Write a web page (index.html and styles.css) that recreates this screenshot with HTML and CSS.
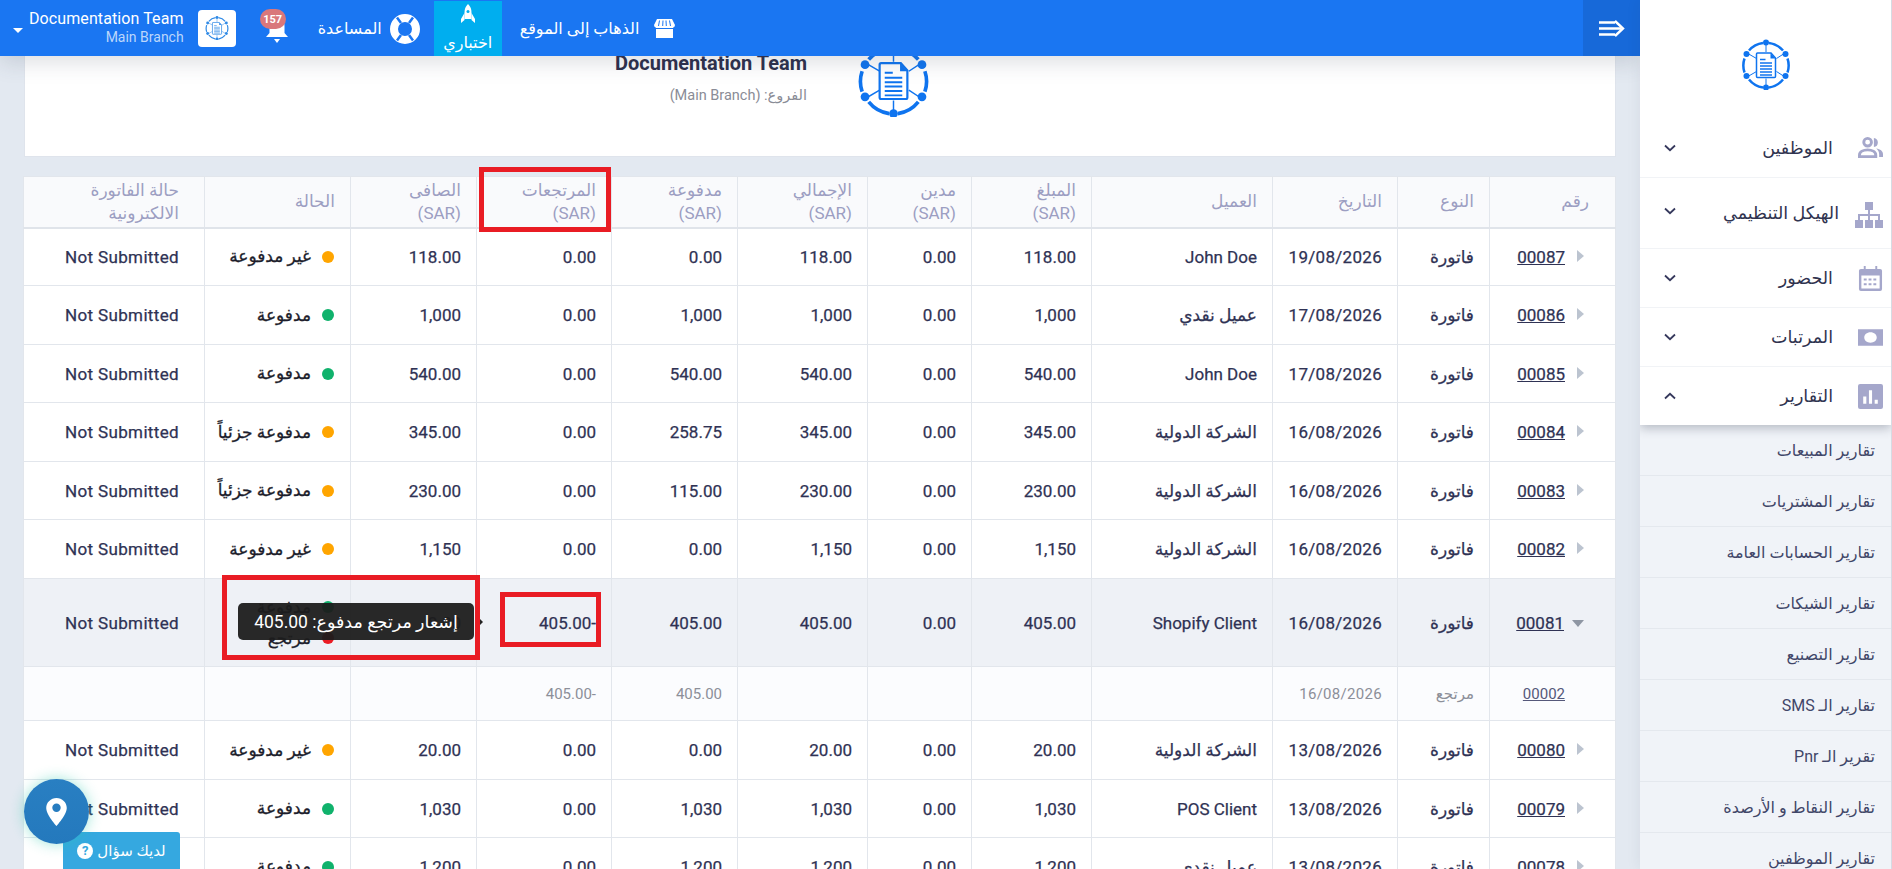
FILE: index.html
```html
<!DOCTYPE html>
<html lang="ar" dir="rtl">
<head>
<meta charset="utf-8">
<title>التقارير</title>
<link rel="stylesheet" href="styles.css">
</head>
<body>
<svg class="defs" width="0" height="0" aria-hidden="true">
  <symbol id="logo" viewBox="0 0 100 100">
    <g fill="none" stroke="currentColor" stroke-width="5">
      <path d="M56 7 A44 44 0 0 1 84 22"/>
      <path d="M93 38 A44 44 0 0 1 93 66"/>
      <path d="M84 80 A44 44 0 0 1 56 96"/>
      <path d="M44 96 A44 44 0 0 1 16 80"/>
      <path d="M7 66 A44 44 0 0 1 7 38"/>
      <path d="M16 22 A44 44 0 0 1 44 7"/>
    </g>
    <g stroke="currentColor" stroke-width="2" fill="none">
      <path d="M50 6V25M50 78V96M12 27L31 38M88 27L71 38M12 75L31 64M88 75L71 64"/>
    </g>
    <g fill="currentColor">
      <circle cx="50" cy="6" r="6"/><circle cx="50" cy="96" r="6"/>
      <circle cx="11" cy="29" r="6"/><circle cx="89" cy="29" r="6"/>
      <circle cx="11" cy="73" r="6"/><circle cx="89" cy="73" r="6"/>
    </g>
    <path d="M33 27H60L69 37V74a2 2 0 0 1-2 2H33a2 2 0 0 1-2-2V29a2 2 0 0 1 2-2Z" fill="#fff" stroke="currentColor" stroke-width="3"/>
    <path d="M59 27V38H69Z" fill="currentColor"/>
    <path d="M38 40H49M38 47H62M38 53H62M38 59H62M38 65H62M38 71H62" stroke="currentColor" stroke-width="2.6"/>
  </symbol>
  <symbol id="chev-down" viewBox="0 0 12 8"><path d="M1 1.5 6 6.2 11 1.5" fill="none" stroke="currentColor" stroke-width="1.8"/></symbol>
</svg>

<div class="app">
  <aside class="sidebar">
    <div class="side-top">
      <div class="side-logo"><svg class="side-logo-img"><use href="#logo"/></svg></div>
      <nav class="side-nav">
        <a class="side-item">
          <svg class="side-icon" viewBox="0 0 26 22"><circle cx="10" cy="5.500" r="4" fill="none" stroke="currentColor" stroke-width="3"/><path d="M16.500 1a4.800 4.800 0 0 1 0 9.500Z" fill="currentColor"/><path d="M1.500 20.500v-1.500c0-3.500 4-5.500 8.500-5.500s8.500 2 8.500 5.500v1.500Z" fill="none" stroke="currentColor" stroke-width="3"/><path d="M19 12c4 .6 7 2.600 7 6v3h-4v-3c0-2.500-1.200-4.500-3-6Z" fill="currentColor"/></svg>
          <span class="side-label">الموظفين</span>
          <svg class="side-chev"><use href="#chev-down"/></svg>
        </a>
        <a class="side-item side-item-tall">
          <svg class="side-icon side-icon-wide" viewBox="0 0 28 26"><path d="M10 0h8v8h-8ZM0 18h8v8H0ZM10 18h8v8h-8ZM20 18h8v8h-8Z" fill="currentColor"/><path d="M14 8v10M4 18v-5h20v5" fill="none" stroke="currentColor" stroke-width="2"/></svg>
          <span class="side-label">الهيكل التنظيمي</span>
          <svg class="side-chev"><use href="#chev-down"/></svg>
        </a>
        <a class="side-item">
          <svg class="side-icon" viewBox="0 0 24 26"><path d="M2 3h3V0h2v3h10V0h2v3h3a2 2 0 0 1 2 2v19a2 2 0 0 1-2 2H2a2 2 0 0 1-2-2V5a2 2 0 0 1 2-2Zm.5 7v13.500h19V10Z" fill="currentColor"/><path d="M5 13h3v2H5ZM10 13h3v2h-3ZM15 13h3v2h-3ZM5 18h3v2H5ZM10 18h3v2h-3ZM15 18h3v2h-3Z" fill="currentColor"/></svg>
          <span class="side-label">الحضور</span>
          <svg class="side-chev"><use href="#chev-down"/></svg>
        </a>
        <a class="side-item">
          <svg class="side-icon" viewBox="0 0 24 16"><path d="M0 0h24v16H0Zm12 3c-3.500 0-6 2.200-6 5s2.500 5 6 5 6-2.200 6-5-2.500-5-6-5Z" fill="currentColor" fill-rule="evenodd"/></svg>
          <span class="side-label">المرتبات</span>
          <svg class="side-chev"><use href="#chev-down"/></svg>
        </a>
        <a class="side-item side-item-open">
          <svg class="side-icon" viewBox="0 0 24 24"><path d="M2 0h20a2 2 0 0 1 2 2v20a2 2 0 0 1-2 2H2a2 2 0 0 1-2-2V2a2 2 0 0 1 2-2Zm3 12v7h3v-7Zm5.500-6v13h3V6Zm5.500 9v4h3v-4Z" fill="currentColor" fill-rule="evenodd"/></svg>
          <span class="side-label">التقارير</span>
          <svg class="side-chev side-chev-up"><use href="#chev-down"/></svg>
        </a>
      </nav>
    </div>
    <ul class="sub-menu">
      <li>تقارير المبيعات</li>
      <li>تقارير المشتريات</li>
      <li>تقارير الحسابات العامة</li>
      <li>تقارير الشيكات</li>
      <li>تقارير التصنيع</li>
      <li>تقارير الـ SMS</li>
      <li>تقرير الـ Pnr</li>
      <li>تقارير النقاط و الأرصدة</li>
      <li>تقارير الموظفين</li>
    </ul>
  </aside>

  <main class="main">
    <header class="topbar">
      <button class="collapse-btn" type="button" aria-label="طي">
        <svg class="collapse-icon" viewBox="0 0 26 17"><path d="M0 2.500h16M0 8.500h22M0 14.500h16" stroke="#fff" stroke-width="2.600" fill="none"/><path d="M16 1 24 8.500 16 16" stroke="#fff" stroke-width="2.400" fill="none"/></svg>
      </button>
      <div class="top-links">
        <a class="top-link top-link-store">
          <svg class="store-icon" viewBox="0 0 21 19"><path d="M3 0h15l3 6a3 3 0 0 1-2 2.800V19H2V8.800A3 3 0 0 1 0 6Z" fill="#fff"/><path d="M5.500 1.500 4.500 7M9 1.500 8.700 7M12 1.500l.3 5.500M15.500 1.500l1 5.500" stroke="#1a76f2" stroke-width="1"/><path d="M2 9.500h17" stroke="#1a76f2" stroke-width="1"/></svg>
          <span class="store-text">الذهاب إلى الموقع</span>
        </a>
        <a class="top-trial">
          <svg class="rocket-icon" viewBox="0 0 16 20"><path d="M8 0c2.600 2.500 3.500 5.500 3.500 8.500V15h-7V8.500C4.500 5.500 5.400 2.500 8 0Z" fill="#fff"/><path d="M4.500 9 1 15v4l3.500-3ZM11.500 9 15 15v4l-3.500-3Z" fill="#fff"/><circle cx="8" cy="7.500" r="1.500" fill="#00aeef"/></svg>
          <span>اختباري</span>
        </a>
        <a class="top-link top-link-help">
          <svg class="buoy-icon" viewBox="0 0 30 30"><circle cx="15" cy="15" r="11" fill="none" stroke="#fff" stroke-width="8"/><path d="M7 3.500 11 9M23 3.500 19 9M7 26.500 11 21M23 26.500 19 21" stroke="#1a76f2" stroke-width="2.500"/></svg>
          <span>المساعدة</span>
        </a>
        <a class="top-bell">
          <svg class="bell-icon" viewBox="0 0 22 26"><path d="M11 1c5 0 7.500 3.500 7.500 8v7l3.500 4H0l3.500-4V9C3.500 4.500 6 1 11 1Z" fill="#fff"/><path d="M8 22h6l-3 4Z" fill="#fff"/></svg>
          <span class="bell-badge">157</span>
        </a>
        <div class="top-account">
          <span class="account-logo"><svg class="account-logo-img"><use href="#logo"/></svg></span>
          <span class="account-text">
            <span class="account-name">Documentation Team</span>
            <span class="account-branch">Main Branch</span>
          </span>
          <span class="account-caret"></span>
        </div>
      </div>
    </header>

    <div class="content">
      <section class="company-card">
        <svg class="company-logo"><use href="#logo"/></svg>
        <div class="company-text">
          <h1 class="company-name">Documentation Team</h1>
          <p class="company-branch">الفروع: (Main Branch)</p>
        </div>
      </section>

      <table class="invoices">
        <colgroup>
          <col class="c-num"><col class="c-type"><col class="c-date"><col class="c-client"><col class="c-amount"><col class="c-due"><col class="c-total"><col class="c-paid"><col class="c-ret"><col class="c-net"><col class="c-status"><col class="c-einv">
        </colgroup>
        <thead>
          <tr>
            <th class="first">رقم</th><th>النوع</th><th>التاريخ</th><th>العميل</th><th>المبلغ<br>(SAR)</th><th>مدين<br>(SAR)</th><th>الإجمالي<br>(SAR)</th><th>مدفوعة<br>(SAR)</th><th>المرتجعات<br>(SAR)</th><th>الصافى<br>(SAR)</th><th>الحالة</th><th class="last">حالة الفاتورة<br>الالكترونية</th>
          </tr>
        </thead>
        <tbody>
          <tr><td class="first"><span class="arrow"></span><a class="num">00087</a></td><td>فاتورة</td><td class="date">19/08/2026</td><td>John Doe</td><td>118.00</td><td>0.00</td><td>118.00</td><td>0.00</td><td>0.00</td><td>118.00</td><td><span class="status"><i class="dot dot-orange"></i>غير مدفوعة</span></td><td class="last">Not Submitted</td></tr>
          <tr><td class="first"><span class="arrow"></span><a class="num">00086</a></td><td>فاتورة</td><td class="date">17/08/2026</td><td>عميل نقدي</td><td>1,000</td><td>0.00</td><td>1,000</td><td>1,000</td><td>0.00</td><td>1,000</td><td><span class="status"><i class="dot dot-green"></i>مدفوعة</span></td><td class="last">Not Submitted</td></tr>
          <tr><td class="first"><span class="arrow"></span><a class="num">00085</a></td><td>فاتورة</td><td class="date">17/08/2026</td><td>John Doe</td><td>540.00</td><td>0.00</td><td>540.00</td><td>540.00</td><td>0.00</td><td>540.00</td><td><span class="status"><i class="dot dot-green"></i>مدفوعة</span></td><td class="last">Not Submitted</td></tr>
          <tr><td class="first"><span class="arrow"></span><a class="num">00084</a></td><td>فاتورة</td><td class="date">16/08/2026</td><td>الشركة الدولية</td><td>345.00</td><td>0.00</td><td>345.00</td><td>258.75</td><td>0.00</td><td>345.00</td><td><span class="status"><i class="dot dot-orange"></i>مدفوعة جزئياً</span></td><td class="last">Not Submitted</td></tr>
          <tr><td class="first"><span class="arrow"></span><a class="num">00083</a></td><td>فاتورة</td><td class="date">16/08/2026</td><td>الشركة الدولية</td><td>230.00</td><td>0.00</td><td>230.00</td><td>115.00</td><td>0.00</td><td>230.00</td><td><span class="status"><i class="dot dot-orange"></i>مدفوعة جزئياً</span></td><td class="last">Not Submitted</td></tr>
          <tr><td class="first"><span class="arrow"></span><a class="num">00082</a></td><td>فاتورة</td><td class="date">16/08/2026</td><td>الشركة الدولية</td><td>1,150</td><td>0.00</td><td>1,150</td><td>0.00</td><td>0.00</td><td>1,150</td><td><span class="status"><i class="dot dot-orange"></i>غير مدفوعة</span></td><td class="last">Not Submitted</td></tr>
          <tr class="row-open"><td class="first"><span class="arrow arrow-open"></span><a class="num">00081</a></td><td>فاتورة</td><td class="date">16/08/2026</td><td>Shopify Client</td><td>405.00</td><td>0.00</td><td>405.00</td><td>405.00</td><td>-405.00</td><td>0.00</td><td><span class="status"><i class="dot dot-green"></i>مدفوعة</span><span class="status"><i class="dot dot-red"></i>مرتجع</span></td><td class="last">Not Submitted</td></tr>
          <tr class="row-child"><td class="first"><a class="num">00002</a></td><td>مرتجع</td><td class="date">16/08/2026</td><td></td><td></td><td></td><td></td><td>405.00</td><td>-405.00</td><td></td><td></td><td></td></tr>
          <tr class="row-tall"><td class="first"><span class="arrow"></span><a class="num">00080</a></td><td>فاتورة</td><td class="date">13/08/2026</td><td>الشركة الدولية</td><td>20.00</td><td>0.00</td><td>20.00</td><td>0.00</td><td>0.00</td><td>20.00</td><td><span class="status"><i class="dot dot-orange"></i>غير مدفوعة</span></td><td class="last">Not Submitted</td></tr>
          <tr><td class="first"><span class="arrow"></span><a class="num">00079</a></td><td>فاتورة</td><td class="date">13/08/2026</td><td>POS Client</td><td>1,030</td><td>0.00</td><td>1,030</td><td>1,030</td><td>0.00</td><td>1,030</td><td><span class="status"><i class="dot dot-green"></i>مدفوعة</span></td><td class="last">Not Submitted</td></tr>
          <tr><td class="first"><span class="arrow"></span><a class="num">00078</a></td><td>فاتورة</td><td class="date">13/08/2026</td><td>عميل نقدي</td><td>1,200</td><td>0.00</td><td>1,200</td><td>1,200</td><td>0.00</td><td>1,200</td><td><span class="status"><i class="dot dot-green"></i>مدفوعة</span></td><td class="last">Not Submitted</td></tr>
        </tbody>
      </table>
    </div>

    <div class="tooltip">إشعار مرتجع مدفوع: 405.00</div>
    <span class="mark mark-head"></span>
    <span class="mark mark-cell"></span>
    <span class="mark mark-tip"></span>

    <a class="pin-btn">
      <svg class="pin-icon" viewBox="0 0 22 30"><path d="M11 0C5 0 0 4.700 0 10.700 0 18 11 30 11 30s11-12 11-19.300C22 4.700 17 0 11 0Zm0 15a4.500 4.500 0 1 1 0-9 4.500 4.500 0 0 1 0 9Z" fill="#fff" fill-rule="evenodd"/></svg>
    </a>
    <a class="ask-btn"><span>لديك سؤال</span><span class="ask-q">?</span></a>
  </main>
</div>
</body>
</html>
```

FILE: styles.css
```css
* { box-sizing: border-box; }
html, body { margin: 0; height: 100%; overflow: hidden; }
body {
  font-family: Roboto, "Noto Sans", "DejaVu Sans", sans-serif;
  color: #35385c;
  background: #e3e9f1;
}
.defs { position: absolute; }
.app { display: flex; height: 869px; }

/* Sidebar */
.sidebar { width: 252px; flex: none; height: 869px; overflow: hidden; position: relative; z-index: 6; background: #f0f3f8; border-right: 1px solid #d6dbe3; box-shadow: 0 0 14px rgba(40, 50, 70, .08); }
.side-top { background: #fff; box-shadow: 0 3px 10px rgba(40, 50, 70, .3); position: relative; z-index: 2; height: 425px; }
.side-logo { height: 118px; display: flex; align-items: flex-start; justify-content: center; padding-top: 39px; padding-left: 1px; }
.side-logo-img { width: 50px; height: 51px; color: #0f74ef; }
.side-nav { display: flex; flex-direction: column; }
.side-item { height: 59px; display: flex; align-items: center; padding: 0 8px 0 0; border-top: 1px solid #f1f3f6; }
.side-item:first-child { border-top: 0; }
.side-item-tall { height: 71px; padding-top: 4px; }
.side-item-tall .side-label { margin-top: -4px; margin-right: -6px; }
.side-item-tall .side-chev { margin-top: -8px; }
.side-icon { width: 25px; height: 25px; flex: none; color: #a5a7cb; margin-left: 25px; }
.side-icon-wide { width: 28px; height: 26px; margin-left: 22px; }
.side-label { flex: 1; font-size: 17.500px; font-weight: 500; color: #30334f; }
.side-chev { width: 12px; height: 8px; margin-left: 24px; color: #35385c; }
.side-chev-up { transform: scaleY(-1); }
.sub-menu { list-style: none; margin: 0; padding: 0; }
.sub-menu li { height: 51px; display: flex; align-items: center; padding: 0 16px 0 0; font-size: 16px; color: #414668; border-bottom: 1px solid #e4e8ee; }

/* Main */
.main { flex: 1; position: relative; min-width: 0; height: 869px; overflow: hidden; }
.topbar { height: 56px; background: #1a76f2; display: flex; align-items: stretch; justify-content: space-between; position: relative; z-index: 4; box-shadow: 0 6px 22px rgba(60, 70, 90, .18); }
.collapse-btn { width: 57px; border: 0; padding: 0; background: #1769d9; display: flex; align-items: center; justify-content: center; }
.collapse-icon { width: 26px; height: 17px; }
.top-links { display: flex; align-items: stretch; color: #fff; font-size: 16px; }
.top-link { display: flex; align-items: center; gap: 15px; padding-top: 1px; }
.store-icon { width: 21px; height: 19px; }
.store-text { letter-spacing: .2px; }
.top-link-store { margin-left: 18px; }
.top-trial { width: 68px; margin-top: 1px; margin-left: 14px; background: #00aeef; display: flex; flex-direction: column; align-items: center; gap: 9px; padding-top: 3px; font-size: 16px; }
.rocket-icon { width: 16px; height: 20px; }
.top-link-help { gap: 8px; margin-left: 28px; }
.buoy-icon { width: 30px; height: 30px; }
.top-bell { position: relative; width: 30px; margin-left: 24px; display: flex; align-items: center; justify-content: center; }
.bell-icon { width: 22px; height: 26px; margin-top: 3px; margin-right: -4px; }
.bell-badge { position: absolute; top: 9px; left: 0; width: 26px; height: 20px; border-radius: 10px; background: #d9777b; color: #fff; font-size: 11px; font-weight: 700; display: flex; align-items: center; justify-content: center; }
.top-account { display: flex; align-items: center; gap: 14px; }
.account-logo { width: 38px; height: 37px; background: #fff; border-radius: 4px; display: flex; align-items: center; justify-content: center; }
.account-logo-img { width: 24px; height: 24px; color: #2f8ae6; }
.account-text { display: flex; flex-direction: column; align-items: flex-start; line-height: 19px; }
.account-name { font-size: 16px; letter-spacing: .1px; direction: ltr; }
.account-branch { font-size: 14px; color: #bcd6fb; direction: ltr; }
.account-caret { width: 0; height: 0; border: 5px solid transparent; border-top-color: #fff; border-bottom: 0; margin: 4px -8px 0 13px; }

/* Content */
.content { padding: 0 24px; }
.company-card { height: 101px; width: 1592px; background: #fff; border: 1px solid #dfe4ec; border-top: 0; display: flex; justify-content: flex-start; padding-right: 685px; gap: 50px; margin-bottom: 19px; }
.company-logo { width: 73px; height: 74px; color: #0f74ef; margin-top: -13px; flex: none; }
.company-text { width: 192px; margin-top: -4px; }
.company-name { font-size: 20px; font-weight: 700; color: #2d2f4c; margin: 0; line-height: 22px; direction: ltr; text-align: right; white-space: nowrap; }
.company-branch { font-size: 14.500px; color: #8a8c96; margin: 13px 0 0; line-height: 18px; white-space: nowrap; }

/* Table */
.invoices { border-collapse: collapse; table-layout: fixed; width: 1592px; background: #fff; font-size: 17px; font-weight: 400; color: #2f3254; }
.c-num { width: 126px; } .c-type { width: 92px; } .c-date { width: 125px; } .c-client { width: 181px; }
.c-amount { width: 120px; } .c-due { width: 104px; } .c-total { width: 130px; } .c-paid { width: 126px; }
.c-ret { width: 135px; } .c-net { width: 126px; } .c-status { width: 146px; } .c-einv { width: 181px; }
.invoices th, .invoices td { border: 1px solid #e2e6ec; padding: 0 15px; text-align: right; white-space: nowrap; }
.invoices td { -webkit-text-stroke: .25px currentColor; }
.invoices th { height: 51px; background: #f9fafc; color: #9c9ec2; font-weight: 400; line-height: 23px; font-size: 17px; border-bottom: 2px solid #e0e4ea; }
.invoices th.first { padding-right: 26px; }
.invoices td.first { padding-right: 31px; }
.invoices .last { padding-right: 25px; }
.invoices td.last { letter-spacing: .35px; }
.invoices .date { letter-spacing: .3px; padding-right: 15px; }
.invoices tbody tr { height: 58px; }
.invoices tbody tr:nth-child(2), .invoices tbody tr:nth-child(4), .invoices tbody tr:nth-child(6), .invoices .row-tall { height: 59px; }
.num { color: #2f3254; text-decoration: underline; }
.arrow { display: inline-block; width: 0; height: 0; border: 6px solid transparent; border-left: 0; border-right: 7px solid #bcc4d0; margin-left: 12px; vertical-align: 1px; transform: scaleX(-1); }
.arrow-open { border: 6.500px solid transparent; border-top: 7px solid #8e96a3; border-bottom: 0; margin-left: 8px; transform: none; vertical-align: 2px; }
.status { display: flex; align-items: center; gap: 11px; padding-right: 1px; line-height: 31px; color: #1c1d2b; font-weight: 500; font-size: 17px; -webkit-text-stroke: .3px #1c1d2b; }
.dot { width: 12px; height: 12px; border-radius: 50%; flex: none; }
.dot-orange { background: #ffa500; } .dot-green { background: #10b26c; } .dot-red { background: #ea1c24; }
.invoices .row-open { height: 88px; }
.row-open td { background: #eef1f6; }
.invoices .row-child { height: 54px; }
.invoices .row-child td { background: #fbfcfe; font-size: 15px; font-weight: 400; color: #8c8f99; -webkit-text-stroke: 0; }
.row-child .num { color: #55587a; }
.invoices .row-child td.first { padding-right: 50px; }

/* Overlays */
.tooltip { position: absolute; left: 238px; top: 603px; width: 236px; height: 37px; background: rgba(28, 28, 28, .95); color: #fff; border-radius: 5px; font-size: 17.500px; display: flex; align-items: center; justify-content: center; z-index: 3; }
.tooltip::after { content: ""; position: absolute; right: -9px; top: 14px; border: 5px solid transparent; border-left-color: #222; border-right: 0; }
.mark { position: absolute; border: 5px solid #e91c24; z-index: 3; }
.mark-head { left: 479px; top: 167px; width: 132px; height: 65px; }
.mark-cell { left: 500px; top: 592px; width: 101px; height: 55px; }
.mark-tip { left: 222px; top: 575px; width: 258px; height: 85px; }
.pin-btn { position: absolute; left: 24px; top: 779px; width: 65px; height: 65px; border-radius: 50%; background: linear-gradient(#297fc2, #2479bd); box-shadow: 0 0 14px rgba(40, 200, 170, .45); display: flex; align-items: center; justify-content: center; z-index: 5; }
.pin-icon { width: 21px; height: 28px; }
.ask-btn { position: absolute; left: 63px; top: 832px; width: 117px; height: 37px; background: #35a8e0; color: #fff; border-radius: 3px 3px 0 0; display: flex; align-items: center; justify-content: center; gap: 4px; font-size: 15px; font-weight: 500; z-index: 4; }
.ask-q { width: 16px; height: 16px; border-radius: 50%; background: #fff; color: #35a8e0; font-size: 13px; font-weight: 700; display: flex; align-items: center; justify-content: center; }
```
